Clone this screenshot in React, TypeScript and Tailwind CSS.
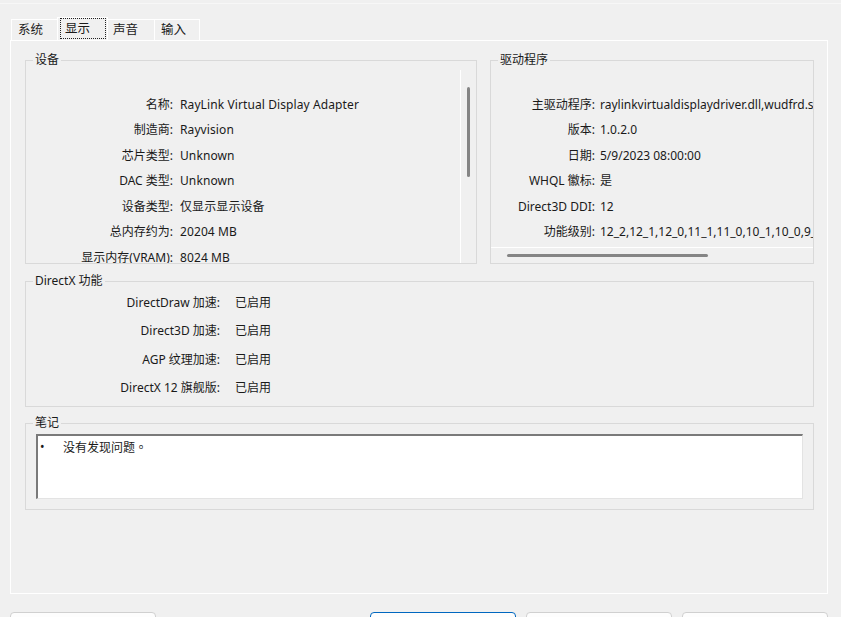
import React from "react";

const leftRows: [string, string][] = [
  ["名称:", "RayLink Virtual Display Adapter"],
  ["制造商:", "Rayvision"],
  ["芯片类型:", "Unknown"],
  ["DAC 类型:", "Unknown"],
  ["设备类型:", "仅显示显示设备"],
  ["总内存约为:", "20204 MB"],
  ["显示内存(VRAM):", "8024 MB"],
];

const rightRows: [string, string][] = [
  ["主驱动程序:", "raylinkvirtualdisplaydriver.dll,wudfrd.sys"],
  ["版本:", "1.0.2.0"],
  ["日期:", "5/9/2023 08:00:00"],
  ["WHQL 徽标:", "是"],
  ["Direct3D DDI:", "12"],
  ["功能级别:", "12_2,12_1,12_0,11_1,11_0,10_1,10_0,9_3,9_2,9_1"],
];

const dxRows: [string, string][] = [
  ["DirectDraw 加速:", "已启用"],
  ["Direct3D 加速:", "已启用"],
  ["AGP 纹理加速:", "已启用"],
  ["DirectX 12 旗舰版:", "已启用"],
];

function Legend({ children }: { children: React.ReactNode }) {
  return (
    <legend className="ml-[7px] px-[2px] text-[12px] leading-[14px] text-[#1a1a1a]">
      {children}
    </legend>
  );
}

export default function App() {
  return (
    <div className="w-[841px] h-[617px] overflow-hidden bg-[#f0f0f0] text-[12px] text-[#1a1a1a] font-['Noto_Sans','Noto_Sans_CJK_SC',sans-serif]">
      <div className="h-[4px] border-b border-[#f7f7f7]" />
      {/* Tabs */}
      <div className="h-[36px] flex items-end pl-[11px]">
        <div className="w-[46px] h-[21px] border-t border-l border-white flex items-center pl-[6px] leading-[14px] text-[12.5px]">
          系统
        </div>
        <div className="w-[51px] h-[23px] border-t border-l border-r border-white pl-[2px] bg-[#f0f0f0]">
          <div className="w-[46px] h-[21px] border border-dotted border-[#222] flex items-center pl-[4px] leading-[14px] text-[12.5px]">
            显示
          </div>
        </div>
        <div className="w-[46px] h-[21px] border-t border-white flex items-center pl-[5px] leading-[14px] text-[12.5px]">
          声音
        </div>
        <div className="w-[46px] h-[21px] border-t border-l border-r border-white flex items-center pl-[6px] leading-[14px] text-[12.5px]">
          输入
        </div>
      </div>

      {/* Panel */}
      <div className="ml-[10px] w-[818px] h-[554px] border border-white pl-[14px] pr-[13px] pt-[12px]">
        <div className="flex gap-[13px]">
          {/* 设备 */}
          <fieldset className="w-[452px] h-[211px] min-w-0 border border-[#d9d9d9]">
            <Legend>设备</Legend>
            <div className="h-[196px] flex">
              <div className="flex-1 overflow-hidden pt-[25px]">
                {leftRows.map(([k, v]) => (
                  <div key={k} className="h-[25.5px] flex items-center whitespace-nowrap">
                    <div className="w-[147px] text-right">{k}</div>
                    <div className="pl-[7px] tracking-[0.1px]">{v}</div>
                  </div>
                ))}
              </div>
              <div className="w-[16px] pt-[3px]">
                <div className="h-full border-l border-white pl-[6px] pt-[17px]">
                  <div className="w-[3px] h-[90px] bg-[#858585] rounded-full" />
                </div>
              </div>
            </div>
          </fieldset>

          {/* 驱动程序 */}
          <fieldset className="flex-1 h-[211px] min-w-0 border border-[#d9d9d9]">
            <Legend>驱动程序</Legend>
            <div className="h-[196px] flex flex-col">
              <div className="h-[180px] overflow-hidden pt-[25px]">
                {rightRows.map(([k, v]) => (
                  <div key={k} className="h-[25.5px] flex items-center whitespace-nowrap">
                    <div className="w-[104px] shrink-0 text-right">{k}</div>
                    <div className="pl-[5px]">{v}</div>
                  </div>
                ))}
              </div>
              <div className="h-[16px] border-t border-white pl-[16px] pt-[6px]">
                <div className="w-[201px] h-[3px] bg-[#858585] rounded-full" />
              </div>
            </div>
          </fieldset>
        </div>

        {/* DirectX 功能 */}
        <fieldset className="mt-[10px] h-[133px] min-w-0 border border-[#d9d9d9]">
          <Legend>DirectX 功能</Legend>
          <div className="pt-[1px]">
            {dxRows.map(([k, v]) => (
              <div key={k} className="h-[28.3px] flex items-center whitespace-nowrap">
                <div className="w-[194px] text-right">{k}</div>
                <div className="pl-[15px]">{v}</div>
              </div>
            ))}
          </div>
        </fieldset>

        {/* 笔记 */}
        <fieldset className="mt-[9px] h-[94px] min-w-0 border border-[#d9d9d9]">
          <Legend>笔记</Legend>
          <div className="px-[10px] pt-[4px]">
            <div className="h-[65px] bg-white border-t-2 border-l-2 border-t-[#7a7a7a] border-l-[#7a7a7a] border-b border-r border-b-[#e3e3e3] border-r-[#e3e3e3]">
              <div className="flex pt-[3px] pl-[2px] leading-[16px]">
                <span className="w-[23px]">•</span>
                <span>
                  没有发现问题<span className="font-['Noto_Sans_CJK_TC',sans-serif]">。</span>
                </span>
              </div>
            </div>
          </div>
        </fieldset>
      </div>

      {/* Buttons */}
      <div className="mt-[18px] flex">
        <div className="ml-[10px] w-[146px] h-[24px] rounded-[4px] border border-[#d0d0d0] bg-[#fdfdfd]" />
        <div className="flex-1" />
        <div className="flex gap-[10px] mr-[13px]">
          <div className="w-[146px] h-[24px] rounded-[4px] border border-[#0067c0] bg-[#fdfdfd]" />
          <div className="w-[146px] h-[24px] rounded-[4px] border border-[#d0d0d0] bg-[#fdfdfd]" />
          <div className="w-[146px] h-[24px] rounded-[4px] border border-[#d0d0d0] bg-[#fdfdfd]" />
        </div>
      </div>
    </div>
  );
}
